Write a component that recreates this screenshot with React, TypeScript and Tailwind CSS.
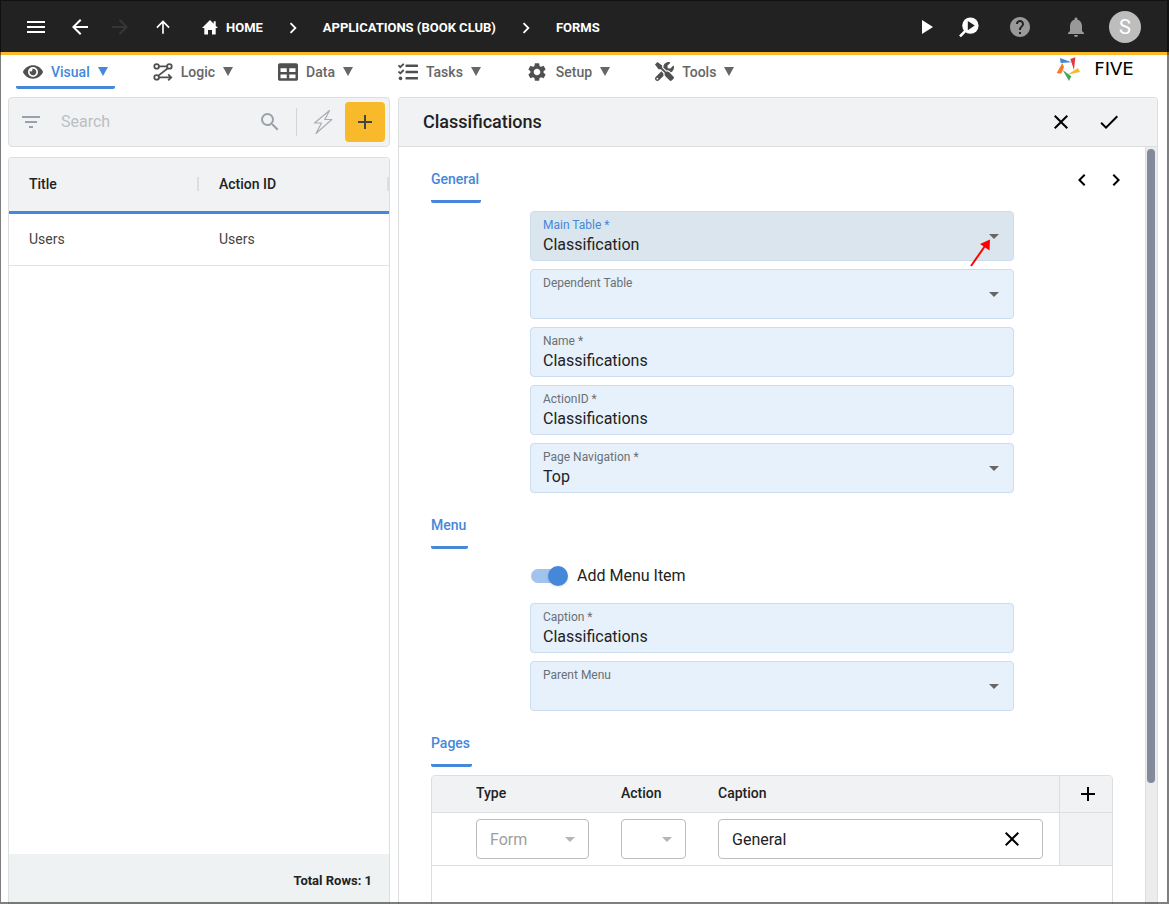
import { useState } from "react";
import type { ReactNode } from "react";
import {
  MdAdd,
  MdArrowBack,
  MdArrowDropDown,
  MdArrowForward,
  MdArrowUpward,
  MdCheck,
  MdChevronLeft,
  MdChevronRight,
  MdClose,
  MdFilterList,
  MdHelp,
  MdMenu,
  MdNotifications,
  MdPlayArrow,
  MdSearch,
  MdSettings,
} from "react-icons/md";
import { FaEye, FaTable, FaTasks, FaTools } from "react-icons/fa";

const HomeIcon = () => (
  <svg width="16" height="15" viewBox="0 0 16 15" fill="currentColor">
    <path d="M8 0 0 8h2.300v6.500H6V10h4v4.500h3.700V8H16l-2.300-2.300V1.300h-2v2.400z" />
  </svg>
);

const LogicIcon = () => (
  <svg width="20" height="20" viewBox="0 0 20 20" fill="none" stroke="currentColor" strokeWidth="1.8">
    <circle cx="3.6" cy="4.4" r="2.3" />
    <circle cx="16.4" cy="4.4" r="2.3" />
    <circle cx="3.6" cy="15.4" r="2.3" />
    <path d="M6 4.4h8M14.8 6.200 5.4 13.600M6 15.400h12M15.2 12.400l3 3-3 3" />
  </svg>
);

const BoltIcon = () => (
  <svg width="20" height="26" viewBox="0 0 20 26" fill="none" stroke="currentColor" strokeWidth="1.2" strokeLinejoin="round">
    <path d="M16.5 1.5 1.5 14h7L3 24.5 18.8 10.5h-7z" />
  </svg>
);

const DebugIcon = () => (
  <svg width="22" height="22" viewBox="0 0 22 22">
    <path d="M2 20.4 7.6 14.6" stroke="#fff" strokeWidth="2.6" />
    <circle cx="12.4" cy="9.6" r="8.2" fill="#fff" />
    <path d="M9.8 5v9.2l7-4.6z" fill="#222" />
  </svg>
);

const Logo = () => (
  <div className="flex items-center gap-1 pr-4">
    <svg width="25" height="24" viewBox="830 170 75 72">
      <path d="M842 173l35 13-33 2z" fill="#4386d8" />
      <path d="M873 176l15-5-4 38z" fill="#e2383f" />
      <path d="M864 223l32-20 6 12z" fill="#f8b92b" />
      <path d="M850 209l26 19-7 14z" fill="#43a85a" />
      <path d="M849 188l-17 30 14 2 8-20z" fill="#f47b2a" />
    </svg>
    <span className="w-[58px] text-center font-['DejaVu_Sans',sans-serif] text-lg leading-6 text-black">FIVE</span>
  </div>
);

const Crumb = ({ children }: { children: ReactNode }) => (
  <a href="#" className="flex items-center gap-2 text-[13px] font-bold uppercase text-white">
    {children}
  </a>
);

const tabs = [
  { name: "Visual", icon: <FaEye size={20} /> },
  { name: "Logic", icon: <LogicIcon /> },
  { name: "Data", icon: <FaTable size={20} /> },
  { name: "Tasks", icon: <FaTasks size={20} /> },
  { name: "Setup", icon: <MdSettings size={22} /> },
  { name: "Tools", icon: <FaTools size={19} /> },
];

const TopBar = () => (
  <header className="flex h-[55px] shrink-0 items-center justify-between border-b-[3px] border-[#fbb829] bg-[#222] pl-6 pr-7 pt-[2px] text-white">
    <div className="flex items-center">
      <button aria-label="Menu"><MdMenu size={24} /></button>
      <button aria-label="Back" className="ml-5"><MdArrowBack size={24} /></button>
      <button aria-label="Forward" className="ml-4 text-[#363636]" disabled><MdArrowForward size={24} /></button>
      <button aria-label="Up" className="ml-[21px]"><MdArrowUpward size={20} /></button>
      <nav aria-label="Breadcrumb" className="ml-[29px] flex items-center gap-[19px] pt-px">
        <Crumb><HomeIcon />Home</Crumb>
        <MdChevronRight size={22} />
        <Crumb>Applications (Book Club)</Crumb>
        <MdChevronRight size={22} />
        <Crumb>Forms</Crumb>
      </nav>
    </div>
    <div className="flex items-center">
      <button aria-label="Run"><MdPlayArrow size={24} /></button>
      <button aria-label="Inspect" className="ml-5"><DebugIcon /></button>
      <button aria-label="Help" className="ml-7 text-[#999]"><MdHelp size={24} /></button>
      <button aria-label="Notifications" className="ml-8 text-[#999]"><MdNotifications size={24} /></button>
      <button className="ml-[21px] size-8 rounded-full bg-[#bdbdbd] text-xl">S</button>
    </div>
  </header>
);

const TabBar = () => (
  <div className="flex h-[34px] shrink-0 justify-between pl-4 pr-[10px]">
    <nav className="flex gap-[31px]">
      {tabs.map(({ name, icon }, i) => (
        <button
          key={name}
          className={`flex items-center gap-2 border-b-[3px] px-[7px] pt-[2px] text-sm font-medium ${i === 0 ? "rounded-b-xs border-[#4588d9] text-[#4588d9]" : "border-transparent text-[#666]"}`}
        >
          <span className="text-[#505050]">{icon}</span>
          {name}
          <svg width="10" height="9" viewBox="0 0 10 9" fill="currentColor"><path d="M0 0h10L5 9z" /></svg>
        </button>
      ))}
    </nav>
    <div className="flex h-7 items-center"><Logo /></div>
  </div>
);

const Sidebar = () => (
  <aside className="flex w-[382px] shrink-0 flex-col gap-[10px]">
    <div className="flex h-[50px] shrink-0 items-center rounded border border-[#dcdee0] bg-[#f1f2f4] pl-[10px] pr-1 text-[#9aa1a8]">
      <button aria-label="Filter"><MdFilterList size={24} /></button>
      <input
        aria-label="Search"
        placeholder="Search"
        className="ml-[18px] min-w-0 flex-1 bg-transparent text-base text-[#222] outline-none placeholder:text-[#bcbfc2]"
      />
      <button aria-label="Run search"><MdSearch size={24} /></button>
      <div className="ml-[14px] h-7 w-px bg-[#d3d5d8]" />
      <button aria-label="Quick actions" className="ml-4 text-[#a9adb2]"><BoltIcon /></button>
      <button aria-label="Add" className="ml-3 flex size-10 items-center justify-center rounded bg-[#f8b92b] text-[#444]">
        <MdAdd size={24} />
      </button>
    </div>

    <div className="flex min-h-0 flex-1 flex-col overflow-hidden rounded-t border border-b-0 border-[#dcdee0]">
      <table className="w-full table-fixed border-separate border-spacing-0 text-left text-sm">
        <thead>
          <tr className="bg-[#f1f2f4]">
            {["Title", "Action ID"].map((h) => (
              <th key={h} className="h-14 border-b-[3px] border-[#4588d9] p-0 pb-[2px] font-medium text-[#222]">
                <div className="flex h-[14px] items-center border-r-2 border-[#dcdee0] pl-5">{h}</div>
              </th>
            ))}
          </tr>
        </thead>
        <tbody>
          <tr>
            <td className="h-[52px] border-b border-[#e2e3e5] pb-[2px] pl-5 text-[#444]">Users</td>
            <td className="h-[52px] border-b border-[#e2e3e5] pb-[2px] pl-5 text-[#444]">Users</td>
          </tr>
        </tbody>
      </table>
      <div className="mt-auto h-[50px] bg-[#eef2f3] pr-[17px] pt-[17px] text-right text-[13px] font-bold leading-5 text-[#222]">
        Total Rows: 1
      </div>
    </div>
  </aside>
);

const SectionTitle = ({ children }: { children: ReactNode }) => (
  <h2 className="flex h-14 w-fit items-end rounded-xs border-b-[3px] border-[#4588d9] pb-[11px] pr-[2px] text-sm font-medium leading-5 text-[#4588d9]">
    {children}
  </h2>
);

type FieldProps = {
  id: string;
  label: string;
  value?: string;
  select?: boolean;
  focused?: boolean;
  children?: ReactNode;
};

const Field = ({ id, label, value = "", select, focused, children }: FieldProps) => (
  <div
    className={`relative h-[50px] rounded border border-[#cbdcee] px-3 pt-[5px] ${focused ? "bg-[#dbe5ed]" : "bg-[#e6f1fc]"}`}
  >
    <label htmlFor={id} className={`block text-xs leading-4 ${focused ? "text-[#4588d9]" : "text-[#6b7075]"}`}>
      {label}
    </label>
    {select ? (
      <select id={id} defaultValue={value} className="block h-6 w-full appearance-none bg-transparent text-base leading-6 text-[#222] outline-none">
        <option value={value}>{value}</option>
      </select>
    ) : (
      <input id={id} defaultValue={value} className="block h-6 w-full bg-transparent text-base text-[#222] outline-none" />
    )}
    {select && <MdArrowDropDown size={24} className="pointer-events-none absolute right-[7px] top-3 text-[#666]" />}
    {children}
  </div>
);

const CellSelect = ({ label, value = "" }: { label: string; value?: string }) => (
  <div className="relative">
    <select aria-label={label} defaultValue={value} disabled className="block h-10 w-full appearance-none rounded border border-[#bdbdbd] bg-white px-[13px] pt-px text-base text-[#9e9e9e]">
      <option value={value}>{value}</option>
    </select>
    <MdArrowDropDown size={24} className="pointer-events-none absolute right-[7px] top-2 text-[#b5b5b5]" />
  </div>
);

const PagesTable = () => (
  <div className="mt-2 min-h-[200px] overflow-hidden rounded-t border border-[#dcdee0]">
    <table className="w-full table-fixed border-separate border-spacing-0 text-left text-sm">
      <colgroup>
        <col className="w-7" />
        <col className="w-[145px]" />
        <col className="w-[97px]" />
        <col />
        <col className="w-[53px]" />
      </colgroup>
      <thead>
        <tr className="bg-[#f1f2f4] text-[#222]">
          <th className="h-[37px] border-b border-[#dcdee0] p-0" />
          <th className="border-b border-[#dcdee0] px-4 pb-[2px] font-medium">Type</th>
          <th className="border-b border-[#dcdee0] px-4 pb-[2px] font-medium">Action</th>
          <th className="border-b border-[#dcdee0] px-4 pb-[2px] font-medium">Caption</th>
          <th className="border-b border-l border-[#dcdee0] p-0">
            <button aria-label="Add page" className="flex w-full justify-center pl-1 text-black"><MdAdd size={24} /></button>
          </th>
        </tr>
      </thead>
      <tbody>
        <tr>
          <td className="h-[53px] border-b border-[#dcdee0] p-0" />
          <td className="border-b border-[#dcdee0] px-4"><CellSelect label="Type" value="Form" /></td>
          <td className="border-b border-[#dcdee0] px-4"><CellSelect label="Action" /></td>
          <td className="border-b border-[#dcdee0] px-4">
            <div className="flex h-10 items-center rounded border border-[#bdbdbd] pl-[13px] pr-[18px]">
              <input aria-label="Caption" defaultValue="General" className="min-w-0 flex-1 bg-transparent pt-px text-base text-[#222] outline-none" />
              <button aria-label="Clear caption" className="text-black"><MdClose size={24} /></button>
            </div>
          </td>
          <td className="border-b border-l border-[#dcdee0] bg-[#f1f2f4] p-0" />
        </tr>
      </tbody>
    </table>
  </div>
);

const FormPanel = () => {
  const [menuItem, setMenuItem] = useState(true);

  return (
    <main className="flex min-w-0 flex-1 flex-col overflow-hidden rounded-t border border-b-0 border-[#dcdee0]">
      <div className="flex h-[49px] shrink-0 items-center border-b border-[#dcdee0] bg-[#f1f2f4] pl-6 pr-9 text-black">
        <h1 className="flex-1 text-lg font-medium text-[#222]">Classifications</h1>
        <button aria-label="Cancel"><MdClose size={24} /></button>
        <button aria-label="Save" className="ml-6"><MdCheck size={24} /></button>
      </div>

      <div className="flex min-h-0 flex-1">
        <div className="min-w-0 flex-1 overflow-hidden">
          <div className="flex items-start justify-between pl-8 pr-[17px]">
            <SectionTitle>General</SectionTitle>
            <div className="flex gap-[10px] pt-[21px] text-black">
              <button aria-label="Previous"><MdChevronLeft size={24} /></button>
              <button aria-label="Next"><MdChevronRight size={24} /></button>
            </div>
          </div>
          <div className="px-8">
            <div className="mx-auto mt-2 flex max-w-[484px] flex-col gap-2">
              <Field id="main-table" label="Main Table *" value="Classification" select focused>
                <svg className="pointer-events-none absolute right-5 top-[25px]" width="24" height="30" viewBox="0 0 24 30">
                  <path d="M2 29 16 9" stroke="#f00" strokeWidth="2" />
                  <path d="M21 2.500 20.500 13.500 11 7z" fill="#f00" />
                </svg>
              </Field>
              <Field id="dependent-table" label="Dependent Table" select />
              <Field id="name" label="Name *" value="Classifications" />
              <Field id="action-id" label="ActionID *" value="Classifications" />
              <Field id="page-navigation" label="Page Navigation *" value="Top" select />
            </div>

            <SectionTitle>Menu</SectionTitle>
            <div className="mx-auto mt-2 flex max-w-[484px] flex-col gap-2">
              <label className="flex h-[38px] items-center gap-[9px] pl-px text-base text-[#222]">
                <span className="relative flex h-5 w-[37px] items-center">
                  <input
                    type="checkbox"
                    checked={menuItem}
                    onChange={(e) => setMenuItem(e.target.checked)}
                    className="peer h-[14px] w-[34px] appearance-none rounded-full bg-gray-300 checked:bg-[#a2c3ec]"
                  />
                  <span className="pointer-events-none absolute left-0 size-5 rounded-full bg-white shadow peer-checked:left-[17px] peer-checked:bg-[#4588d9]" />
                </span>
                Add Menu Item
              </label>
              <Field id="caption" label="Caption *" value="Classifications" />
              <Field id="parent-menu" label="Parent Menu" select />
            </div>

            <SectionTitle>Pages</SectionTitle>
            <PagesTable />
          </div>
        </div>

        <div className="w-3 shrink-0 border-l border-[#dcdee0] bg-[#ececec] pl-px pt-[2px]">
          <div className="h-[84%] w-2 rounded-full bg-[#838a9a]" />
        </div>
      </div>
    </main>
  );
};

export default function App() {
  return (
    <div className="relative flex h-screen flex-col overflow-hidden bg-white font-[Roboto,sans-serif]">
      <TopBar />
      <TabBar />
      <div className="flex min-h-0 flex-1 gap-2 pl-2 pr-[11px] pt-2">
        <Sidebar />
        <FormPanel />
      </div>
      <div className="pointer-events-none absolute inset-0 border-b-2 border-l border-r-2 border-t border-black/50" />
    </div>
  );
}
